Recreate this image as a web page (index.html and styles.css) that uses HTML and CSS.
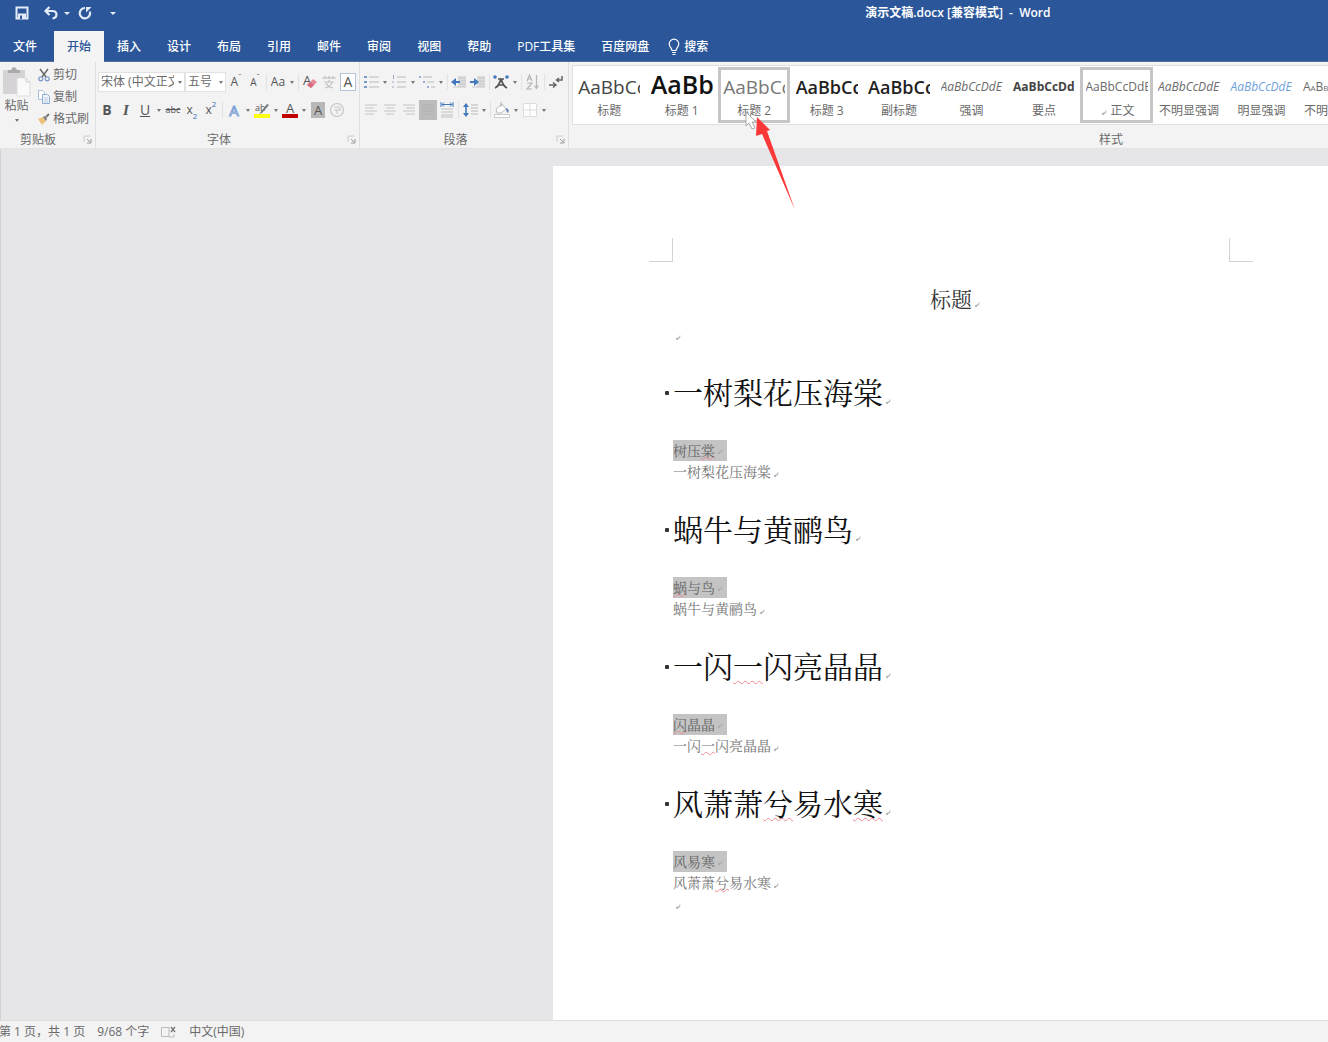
FILE: index.html
```html
<!DOCTYPE html>
<html lang="zh-CN">
<head>
<meta charset="utf-8">
<title>演示文稿.docx - Word</title>
<meta name="viewport" content="width=device-width, initial-scale=1">
<link rel="stylesheet" href="styles.css">
</head>
<body>
<svg width="0" height="0" class="defs" aria-hidden="true">
  <symbol id="ret" viewBox="0 0 12 12"><path d="M7 4.500 6.500 7 3.500 8M3 8l2.500-1.500M3 8l2 .8" fill="none" stroke="currentColor" stroke-width=".9"/></symbol>
  <symbol id="launch" viewBox="0 0 9 9"><path d="M1 7V1h6" fill="none" stroke="#ccc"/><path d="M4 4l3 3M8 4v4H4" fill="none" stroke="#999"/></symbol>
</svg>
<header class="titlebar">
  <div class="quick">
    <button aria-label="保存"><svg width="14" height="14" viewBox="0 0 14 14"><path d="M1.500 1.500h11v11h-11z" fill="none" stroke="#e4ecf8" stroke-width="2"/><path d="M3 7.500h8V13H3z" fill="#e4ecf8"/><path d="M5 9.500h2V13H5z" fill="#2b579a"/></svg></button>
    <button aria-label="撤消" class="undo"><svg width="14" height="14" viewBox="0 0 14 14"><path d="M2 5h6.500c5.500 0 5 7 0 7.500" fill="none" stroke="#e4ecf8" stroke-width="2.200"/><path d="M5.500 1 1.500 5l4 4" fill="none" stroke="#e4ecf8" stroke-width="2.200"/></svg></button>
    <button aria-label="撤消选项" class="caret light"></button>
    <button aria-label="重复" class="redo"><svg width="14" height="14" viewBox="0 0 14 14"><path d="M7 2A5.200 5.200 0 1 0 11.800 5.500" fill="none" stroke="#e4ecf8" stroke-width="2.200"/><path d="M13.500 1H8v5.500z" fill="#e4ecf8"/></svg></button>
    <button aria-label="自定义快速访问工具栏" class="caret light"></button>
  </div>
  <h1 class="doc-name">演示文稿.docx [兼容模式]&nbsp; -&nbsp; Word</h1>
</header>
<nav class="tabs">
  <a href="#file" class="file">文件</a><a href="#home" class="active">开始</a><a href="#insert">插入</a><a href="#design">设计</a><a href="#layout">布局</a><a href="#ref">引用</a><a href="#mail">邮件</a><a href="#review">审阅</a><a href="#view">视图</a><a href="#help">帮助</a><a href="#pdf">PDF工具集</a><a href="#pan">百度网盘</a>
  <a href="#search" class="search"><svg width="12" height="18" viewBox="0 0 12 18"><path d="M4 12.500C4 10 1.200 9 1.200 6a4.800 4.800 0 0 1 9.600 0C10.800 9 8 10 8 12.500zM4 14.500h4M4.500 16.500h3" fill="none" stroke="#fff" stroke-width="1.200"/></svg>搜索</a>
</nav>
<section class="ribbon">
  <div class="group clipboard">
    <div class="clip-body">
      <button class="paste"><svg width="30" height="31" viewBox="0 0 30 31"><path d="M1 4h22v24H1z" fill="#d5d3d6"/><path d="M6 7V4h3q3-6 6 0h3v3z" fill="#aaa"/><path d="M15 12h9l4 4v14H15z" fill="#fafafa" stroke="#ddd"/><path d="M24 12v4h4" fill="none" stroke="#ccc"/></svg>粘贴<i class="tri"></i></button>
      <div class="clip-list">
        <button><svg width="12" height="14" viewBox="0 0 12 14"><path d="M2 1l6 8M10 1 4 9" stroke="#666" stroke-width="1.400"/><circle cx="2.800" cy="10.800" r="2" fill="none" stroke="#7c9ac8" stroke-width="1.200"/><circle cx="9.200" cy="10.800" r="2" fill="none" stroke="#7c9ac8" stroke-width="1.200"/></svg>剪切</button>
        <button><svg width="12" height="14" viewBox="0 0 12 14"><path d="M.5.500h4l2 2v7h-6z" fill="#fff" stroke="#a9bfdc"/><path d="M4.500 4.500h5l2 2v7h-7z" fill="#eef4fb" stroke="#8fadd6"/><path d="M6 8h4M6 10h4M6 12h4" stroke="#a9bfdc" stroke-width=".7"/></svg>复制</button>
        <button><svg width="12" height="14" viewBox="0 0 12 14"><path d="M0 7l5-2 3 4-4 4z" fill="#ecc27a"/><path d="M5 5l2-1 2 3-1 2z" fill="#777"/><path d="M8 5l3-3" stroke="#777" stroke-width="2"/></svg>格式刷</button>
      </div>
    </div>
    <footer><span>剪贴板</span><button aria-label="剪贴板选项"><svg width="9" height="9"><use href="#launch"/></svg></button></footer>
  </div>

  <div class="group font">
    <div class="tools">
      <div class="row">
        <div class="combos">
          <label class="combo family"><select aria-label="字体"><option>宋体 (中文正文)</option></select><i class="tri"></i></label>
          <label class="combo size"><select aria-label="字号"><option>五号</option></select><i class="tri"></i></label>
        </div>
        <button aria-label="增大字号"><span class="grow">A</span><sup>ˆ</sup></button>
        <button aria-label="减小字号"><span class="shrink">A</span><sup>ˇ</sup></button>
        <i class="sep"></i>
        <button aria-label="更改大小写">Aa</button><button class="caret" aria-label="大小写选项"></button>
        <i class="sep"></i>
        <button aria-label="清除格式"><svg width="18" height="18" viewBox="0 0 18 18"><text x="2" y="12" class="glyph">A</text><path d="M6 12l6-6 4 3-6 6z" fill="#e58b99"/><path d="M6 12l3-3 4 3-3 3z" fill="#d86d80"/></svg></button>
        <button aria-label="拼音指南"><svg width="18" height="18" viewBox="0 0 18 18"><path d="M2 5h14M5 3v3M9 3v3M13 3v3M4 9h10M9 7v2M5 15q6-1 7-6M6 10q2 4 7 5" fill="none" stroke="#c0c0c0" stroke-width="1.200"/></svg></button>
        <button aria-label="字符边框"><span class="boxed">A</span></button>
      </div>
      <div class="row">
        <button aria-label="加粗"><b>B</b></button>
        <button aria-label="倾斜"><em>I</em></button>
        <button aria-label="下划线"><u>U</u></button><button class="caret" aria-label="下划线选项"></button>
        <button aria-label="删除线"><s>abc</s></button>
        <button aria-label="下标">x<sub class="blue">2</sub></button>
        <button aria-label="上标">x<sup class="blue">2</sup></button>
        <i class="sep"></i>
        <button aria-label="文本效果"><span class="outline">A</span></button><button class="caret" aria-label="效果选项"></button>
        <button aria-label="突出显示"><svg width="18" height="18" viewBox="0 0 18 18"><text x="2" y="10" class="glyph tiny">ab</text><path d="M7 12l7-9 2 1-7 8-3 1z" fill="#777"/><path d="M1 13h16v4H1z" fill="#ffff16"/></svg></button><button class="caret" aria-label="突出显示颜色"></button>
        <button aria-label="字体颜色"><svg width="18" height="18" viewBox="0 0 18 18"><text x="5" y="12" class="glyph">A</text><path d="M1 13h16v4H1z" fill="#c00000"/></svg></button><button class="caret" aria-label="更多字体颜色"></button>
        <button aria-label="字符底纹"><span class="shade">A</span></button>
        <button aria-label="带圈字符"><svg width="16" height="16" viewBox="0 0 16 16"><circle cx="8" cy="8" r="6.500" fill="none" stroke="#c5c5c5" stroke-width="1.200"/><path d="M5 5h6v3M5 8h7M8 8v4" fill="none" stroke="#c5c5c5"/></svg></button>
      </div>
    </div>
    <footer><span>字体</span><button aria-label="字体选项"><svg width="9" height="9"><use href="#launch"/></svg></button></footer>
  </div>

  <div class="group para">
    <div class="tools">
      <div class="row">
        <button aria-label="项目符号"><svg width="18" height="16" viewBox="0 0 18 16"><path d="M2 3h3M2 8h3M2 13h3" stroke="#7a99c9" stroke-width="2"/><path d="M7 3h10M7 8h10M7 13h10" stroke="#bbb"/></svg></button><button class="caret" aria-label="项目符号选项"></button>
        <button aria-label="编号"><svg width="18" height="16" viewBox="0 0 18 16"><path d="M3.500 1v4M2 8h2M2 13h2" stroke="#9aa9bf"/><path d="M7 3h9M7 8h9M7 13h9" stroke="#bbb"/></svg></button><button class="caret" aria-label="编号选项"></button>
        <button aria-label="多级列表"><svg width="18" height="16" viewBox="0 0 18 16"><path d="M1 3h2M5 8h2M9 13h2" stroke="#7a99c9" stroke-width="1.500"/><path d="M5 3h9M9 8h7M13 13h4" stroke="#bbb"/></svg></button><button class="caret" aria-label="多级列表选项"></button>
        <i class="sep"></i>
        <button aria-label="减少缩进"><svg width="18" height="16" viewBox="0 0 18 16"><path d="M8 2h8v11H8z" fill="#dcdcde"/><path d="M9 4h7M9 7h7M9 10h7M3 13h13" stroke="#c8c8c8"/><path d="M1 8l5-4v3h4v2H6v3z" fill="#4478bd"/></svg></button>
        <button aria-label="增加缩进"><svg width="18" height="16" viewBox="0 0 18 16"><path d="M8 2h8v11H8z" fill="#dcdcde"/><path d="M9 4h7M9 7h7M9 10h7M3 13h13" stroke="#c8c8c8"/><path d="M10 8 5 4v3H1v2h4v3z" fill="#4478bd"/></svg></button>
        <i class="sep"></i>
        <button aria-label="中文版式"><svg width="18" height="16" viewBox="0 0 18 16"><path d="M3 14Q7 12 8.500 6h1Q11 12 15 14M6 11h6M6 5h6" fill="none" stroke="#555" stroke-width="1.700"/><circle cx="3" cy="3" r="1.800" fill="#4478bd"/><circle cx="15" cy="3" r="1.800" fill="#4478bd"/></svg></button><button class="caret" aria-label="中文版式选项"></button>
        <i class="sep"></i>
        <button aria-label="排序"><svg width="18" height="18" viewBox="0 0 18 18"><path d="M3 8l2.500-6L8 8M4 6h3M3 10h5l-5 6h5" fill="none" stroke="#b5b5b5" stroke-width="1.200"/><path d="M12.500 2v13M10.500 12.500l2 3 2-3" fill="none" stroke="#b5b5b5" stroke-width="1.200"/></svg></button>
        <i class="sep"></i>
        <button aria-label="显示编辑标记"><svg width="18" height="16" viewBox="0 0 18 16"><path d="M15 2v4h-5M12 4l-2.500 2L12 8M2 11h6M6 8.500 9 11l-3 2.500" fill="none" stroke="#666" stroke-width="1.500"/></svg></button>
      </div>
      <div class="row">
        <button aria-label="左对齐"><svg width="18" height="16" viewBox="0 0 18 16"><path d="M3 3h12M3 6h9M3 9h12M3 12h9" stroke="#c4c4c4"/></svg></button>
        <button aria-label="居中"><svg width="18" height="16" viewBox="0 0 18 16"><path d="M3 3h12M5 6h8M3 9h12M5 12h8" stroke="#c4c4c4"/></svg></button>
        <button aria-label="右对齐"><svg width="18" height="16" viewBox="0 0 18 16"><path d="M3 3h12M6 6h9M3 9h12M6 12h9" stroke="#c4c4c4"/></svg></button>
        <button aria-label="两端对齐" aria-pressed="true" class="on"><svg width="18" height="16" viewBox="0 0 18 16"><path d="M3 3h12M3 6h12M3 9h12M3 12h12" stroke="#b0b0b0"/></svg></button>
        <button aria-label="分散对齐"><svg width="18" height="16" viewBox="0 0 18 16"><path d="M3 0v5M15 0v5M4 2.500h10M6 .5l-2 2 2 2M12 .5l2 2-2 2" fill="none" stroke="#4478bd"/><path d="M3 7h12M3 10h12M3 13h12M3 15h12" stroke="#c0c0c0"/></svg></button>
        <i class="sep"></i>
        <button aria-label="行距"><svg width="18" height="18" viewBox="0 0 18 18"><path d="M5 3v12" stroke="#4478bd" stroke-width="1.600"/><path d="M2 6l3-4 3 4zM2 12l3 4 3-4z" fill="#4478bd"/><path d="M10 4h7M10 7h7M10 10h7M10 13h7" stroke="#bbb"/></svg></button><button class="caret" aria-label="行距选项"></button>
        <i class="sep"></i>
        <button aria-label="底纹"><svg width="18" height="18" viewBox="0 0 18 18"><path d="M3 8l6-5 4 5-5 4H4z" fill="#fff" stroke="#bbb"/><path d="M8 1v5" stroke="#aaa"/><path d="M13 7q4 1 2 5-2-1-2-5" fill="#6685b8"/><path d="M1.500 13.500h15v3h-15z" fill="#fff" stroke="#ccc"/></svg></button><button class="caret" aria-label="底纹选项"></button>
        <button aria-label="边框"><svg width="16" height="16" viewBox="0 0 16 16"><path d="M1.500 1.500h13v13h-13zM8 1v14M1 8h14" fill="#fff" stroke="#dcdcdc"/></svg></button><button class="caret" aria-label="边框选项"></button>
      </div>
    </div>
    <footer><span>段落</span><button aria-label="段落选项"><svg width="9" height="9"><use href="#launch"/></svg></button></footer>
  </div>

  <div class="group styles">
    <ul class="gallery">
      <li><button><span class="pv big">AaBbCc</span>标题</button></li>
      <li><button><span class="pv huge">AaBb</span>标题 1</button></li>
      <li><button class="picked"><span class="pv big soft">AaBbCc</span>标题 2</button>
        <svg class="pointer" width="60" height="104" viewBox="0 0 60 104"><path d="M3 3v14l3-3 3 6 3-1-3-6h4z" fill="#fff" stroke="#aaa"/><path d="M14 8 27 21 24 22 52 101 19 25 13 27z" fill="#fb3838"/></svg></li>
      <li><button><span class="pv mid">AaBbCc</span>标题 3</button></li>
      <li><button><span class="pv mid">AaBbCc</span>副标题</button></li>
      <li><button><span class="pv ital">AaBbCcDdE</span>强调</button></li>
      <li><button><span class="pv bold">AaBbCcDd</span>要点</button></li>
      <li><button class="picked"><span class="pv">AaBbCcDdE</span><span><svg class="ret" width="12" height="12"><use href="#ret"/></svg>正文</span></button></li>
      <li><button><span class="pv ital">AaBbCcDdE</span>不明显强调</button></li>
      <li><button><span class="pv ital link">AaBbCcDdE</span>明显强调</button></li>
      <li><button><span class="pv caps">AaBbCcDdE</span>不明显参考</button></li>
    </ul>
    <footer><span>样式</span></footer>
  </div>
</section>

<main class="desk">
  <article class="page">
    <div class="corners"><i></i><i></i></div>
    <div class="text">
      <p class="title">标题<svg class="ret" width="12" height="12"><use href="#ret"/></svg></p>
      <p><svg class="ret" width="12" height="12"><use href="#ret"/></svg></p>
      <h2>一树梨花压海棠<svg class="ret" width="12" height="12"><use href="#ret"/></svg></h2>
      <p><mark>树压<span class="err">棠</span><svg class="ret" width="12" height="12"><use href="#ret"/></svg></mark></p>
      <p>一树梨花压海棠<svg class="ret" width="12" height="12"><use href="#ret"/></svg></p>
      <h2>蜗牛与黄鹂鸟<svg class="ret" width="12" height="12"><use href="#ret"/></svg></h2>
      <p><mark><span class="err">蜗</span>与鸟<svg class="ret" width="12" height="12"><use href="#ret"/></svg></mark></p>
      <p>蜗牛与黄鹂鸟<svg class="ret" width="12" height="12"><use href="#ret"/></svg></p>
      <h2>一闪<span class="err">一</span>闪亮晶晶<svg class="ret" width="12" height="12"><use href="#ret"/></svg></h2>
      <p><mark><span class="err">闪</span>晶晶<svg class="ret" width="12" height="12"><use href="#ret"/></svg></mark></p>
      <p>一闪<span class="err">一</span>闪亮晶晶<svg class="ret" width="12" height="12"><use href="#ret"/></svg></p>
      <h2>风萧萧<span class="err">兮</span>易水<span class="err">寒</span><svg class="ret" width="12" height="12"><use href="#ret"/></svg></h2>
      <p><mark>风易寒<svg class="ret" width="12" height="12"><use href="#ret"/></svg></mark></p>
      <p>风萧萧<span class="err">兮</span>易水寒<svg class="ret" width="12" height="12"><use href="#ret"/></svg></p>
      <p><svg class="ret" width="12" height="12"><use href="#ret"/></svg></p>
    </div>
  </article>
</main>
<footer class="status">
  <span>第 1 页，共 1 页</span><span>9/68 个字</span>
  <svg width="16" height="14" viewBox="0 0 16 14"><path d="M8 2.500H.5v9H8M8 2v10h5V9" fill="none" stroke="#bbb"/><path d="M10 2l4 5M14 2l-4 5" stroke="#777" stroke-width="1.300"/></svg>
  <span>中文(中国)</span>
</footer>
</body>
</html>
```
FILE: styles.css
```css
* { box-sizing: border-box; }
body {
  margin: 0;
  min-height: 100vh;
  display: flex;
  flex-direction: column;
  overflow: hidden;
  background: #e6e6e8;
  color: #6a6a6a;
  font: 12px/18px "Open Sans", "Noto Sans CJK SC", sans-serif;
}
button, select { font: inherit; color: inherit; background: none; border: 0; padding: 0; margin: 0; }
h1, h2, p, ul { margin: 0; padding: 0; font-weight: 400; }
i { font-style: normal; }
.defs { position: absolute; }
svg { flex: none; overflow: visible; }

.tri, .caret::after {
  display: block;
  width: 0;
  border: 2px solid transparent;
  border-top: 3px solid #777;
  border-bottom: 0;
  content: "";
}
.caret.light::after { border-top-color: #e4ecf8; border-width: 3px 3px 0; }

/* Title bar and tabs */
.titlebar {
  display: grid;
  grid-template-columns: 65% 1fr;
  align-items: center;
  height: 31px;
  padding-bottom: 5px;
  background: #2b579a;
  color: #fff;
}
.quick { display: flex; align-items: center; padding-left: 15px; }
.quick button { display: flex; }
.quick .undo { margin-left: 15px; }
.quick .undo + .caret { margin-left: 6px; }
.quick .redo { margin-left: 8px; }
.quick .redo + .caret { margin-left: 18px; }
.doc-name { font-size: 12px; font-weight: 600; white-space: nowrap; padding-left: 2px; }
.tabs { display: flex; height: 31px; background: #2b579a; border-bottom: 1px solid #56719f; }
.tabs a {
  display: flex;
  align-items: center;
  padding: 1px 13px 0;
  color: #fff;
  font-weight: 500;
  text-decoration: none;
  white-space: nowrap;
}
.tabs .file { padding-right: 17px; }
.tabs .active { background: #f4f4f5; color: #2b579a; margin-bottom: -1px; }
.tabs .search { padding: 1px 6px 0; gap: 4px; }

/* Ribbon */
.ribbon { display: flex; height: 87px; background: #f3f3f4; border-bottom: 1px solid #e3e3e5; }
.group {
  display: flex;
  flex: none;
  flex-direction: column;
  justify-content: space-between;
  border-right: 1px solid #e0e0e2;
}
.group > footer { display: flex; align-items: center; height: 17px; padding-right: 3px; }
.group > footer span { flex: 1; padding-right: 7px; text-align: center; }
.group > footer button { display: flex; }
.clipboard { width: 96px; }
.font { width: 264px; padding-left: 2px; }
.para { width: 209px; padding-left: 2px; }
.clip-body { display: flex; padding-top: 4px; }
.paste { display: flex; flex-direction: column; align-items: center; width: 33px; line-height: 18px; }
.paste .tri { margin-top: 4px; }
.clip-list { display: flex; flex-direction: column; gap: 4px; padding-left: 5px; }
.clip-list button { display: flex; align-items: center; gap: 3px; height: 18px; white-space: nowrap; }

.tools { display: flex; flex-direction: column; gap: 8px; padding-top: 10px; }
.row { display: flex; align-items: center; gap: 1px; height: 20px; }
.row button {
  display: flex;
  align-items: center;
  justify-content: center;
  width: 18px;
  height: 20px;
  line-height: 18px;
  color: #555;
}
.row .caret { width: 8px; }
.sep { width: 1px; height: 16px; margin: 0 1px; background: #e2e2e4; }
.row b { font-size: 14px; }
.row em { font: italic bold 15px "Liberation Serif", serif; }
.row u { font-size: 14px; }
.row s { font-size: 9px; }
.row sup, .row sub { font-size: 8px; line-height: 8px; align-self: flex-start; }
.row sub { align-self: flex-end; }
.blue { color: #3a6db5; }
.shrink { font-size: 10px; }
.boxed { width: 16px; border: 1px solid #b5c3d8; background: #fff; font-size: 14px; line-height: 16px; text-align: center; }
.shade { width: 14px; background: #b8b8b8; font-size: 13px; line-height: 16px; text-align: center; }
.outline { font-size: 15px; color: #fff; -webkit-text-stroke: 1px #7fa3d8; }
.glyph { font-size: 13px; fill: #555; }
.glyph.tiny { font-size: 9px; }
.row .on { background: #bcbcbc; }
.combos { display: flex; }
.combo { position: relative; display: flex; height: 20px; background: #fff; border: 1px solid #e2e2e2; }
.combo select { appearance: none; width: 100%; padding: 0 10px 0 2px; overflow: hidden; }
.combo .tri { position: absolute; right: 2px; top: 8px; }
.family { width: 87px; }
.size { width: 41px; }

/* Styles gallery */
.group.styles { flex: 1; min-width: 0; border: 0; padding: 3px 0 0 3px; }
.gallery {
  display: grid;
  grid-auto-flow: column;
  grid-auto-columns: 9.600%;
  height: 60px;
  background: #fff;
  border: 1px solid #e0e0e0;
  border-right: 0;
  list-style: none;
}
.gallery li { position: relative; padding-top: 1px; }
.gallery button {
  display: flex;
  flex-direction: column;
  align-items: center;
  width: 100%;
  height: 56px;
  border: 3px solid transparent;
  white-space: nowrap;
}
.gallery .picked { border-color: #c6c6c6; }
.pv { width: 62px; height: 32px; flex: none; overflow: hidden; line-height: 34px; text-align: left; }
.pv.big { font-size: 19px; color: #444; }
.pv.soft { color: #777; }
.pv.huge { font-size: 25px; line-height: 29px; font-weight: 600; color: #111; }
.pv.mid { font-size: 18px; font-weight: 600; color: #222; }
.pv.ital { font-style: italic; }
.pv.bold { font-weight: 700; color: #444; }
.pv.link { color: #6f9fdc; }
.pv.caps { font-variant: small-caps; }
.pointer { position: absolute; left: 25px; top: 43px; z-index: 2; }
.styles > footer span { flex: none; padding: 0 0 0 70%; }

/* Document */
.desk { flex: 1; display: flex; justify-content: flex-end; padding-top: 17px; overflow: hidden; border-left: 1px solid #d2d2d4; }
.page { flex: none; width: 796px; margin-right: -21px; background: #fff; padding-top: 72px; }
.corners { display: flex; justify-content: space-between; padding: 0 96px; }
.corners i { width: 24px; height: 24px; border: solid #d4d4d4; border-width: 0 1px 1px 0; }
.corners i + i { border-width: 0 0 1px 1px; }
.text {
  padding: 11px 120px 0;
  font-family: "SimSun", "Noto Serif CJK SC", "Noto Sans CJK SC", serif;
  font-size: 14px;
  line-height: 21px;
  color: #777;
}
.text p { height: 21px; }
.text .title { height: 51px; padding-left: 12px; line-height: 51px; font-size: 21px; color: #333; text-align: center; }
.text h2 { position: relative; padding: 27px 0 29px; font-size: 30px; line-height: 39px; color: #111; }
.text h2::before {
  content: "";
  position: absolute;
  left: -8px;
  top: 46px;
  width: 4px;
  height: 4px;
  border-radius: 1px;
  background: #333;
}
.text mark { display: inline-flex; height: 21px; align-items: center; vertical-align: top; background: #c4c4c4; color: #666; }
.ret { color: #aaa; vertical-align: -3px; }
.err { text-decoration: underline wavy #ee8a92 1px; text-underline-offset: 2px; text-decoration-skip-ink: none; }
.text p .err { text-underline-offset: 0; }

.status { display: flex; align-items: center; gap: 12px; height: 22px; background: #f3f3f4; border-top: 1px solid #dcdcde; white-space: nowrap; }
.status span:first-child { margin-left: -1px; }
```
